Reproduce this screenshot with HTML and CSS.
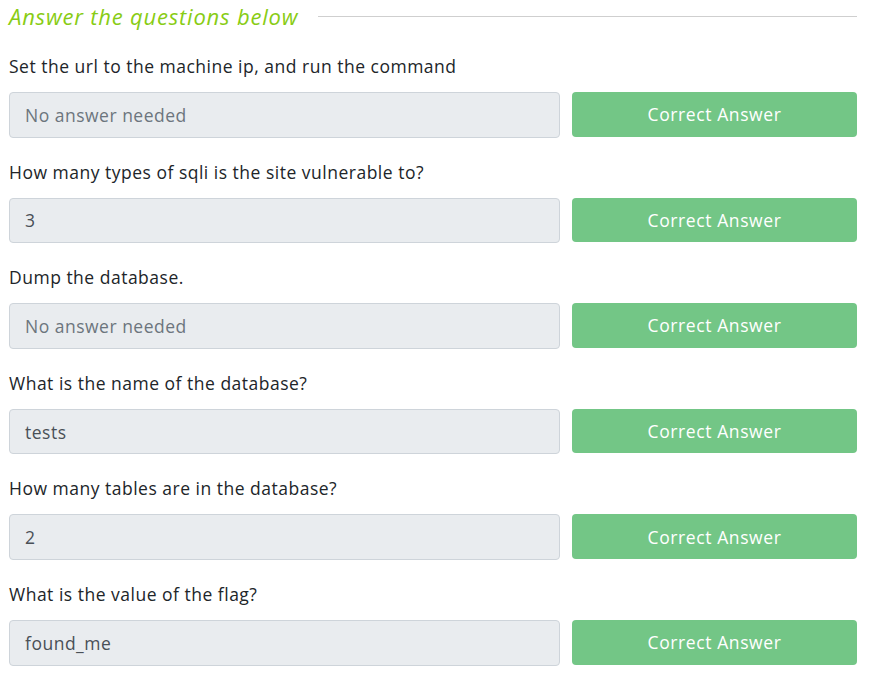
FILE: index.html
```html
<!DOCTYPE html>
<html>
<head>
<meta charset="utf-8">
<link rel="stylesheet" href="styles.css">
</head>
<body>
<div class="wrap">
  <div class="heading">
    <h3 class="title">Answer the questions below</h3>
    <div class="rule"></div>
  </div>
  <div class="q">
    <div class="label">Set the url to the machine ip, and run the command</div>
    <div class="row"><div class="input placeholder">No answer needed</div><div class="btn">Correct Answer</div></div>
  </div>
  <div class="q">
    <div class="label">How many types of sqli is the site vulnerable to?</div>
    <div class="row"><div class="input">3</div><div class="btn">Correct Answer</div></div>
  </div>
  <div class="q">
    <div class="label">Dump the database.</div>
    <div class="row"><div class="input placeholder">No answer needed</div><div class="btn">Correct Answer</div></div>
  </div>
  <div class="q">
    <div class="label">What is the name of the database?</div>
    <div class="row"><div class="input">tests</div><div class="btn">Correct Answer</div></div>
  </div>
  <div class="q">
    <div class="label">How many tables are in the database?</div>
    <div class="row"><div class="input">2</div><div class="btn">Correct Answer</div></div>
  </div>
  <div class="q">
    <div class="label">What is the value of the flag?</div>
    <div class="row"><div class="input">found_me</div><div class="btn">Correct Answer</div></div>
  </div>
</div>
</body>
</html>
```
FILE: styles.css
```css
html, body { margin: 0; padding: 0; background: #ffffff; }
body { font-family: "Open Sans", "Noto Sans", sans-serif; color: #212529; }
.wrap { padding: 2px 12px 0 9px; width: 848px; }
.heading { display: flex; align-items: center; gap: 20px; height: 28px; margin-bottom: 26px; }
.title { margin: 0; font-size: 22px; font-weight: 400; font-style: italic; color: #88cc14; white-space: nowrap; letter-spacing: 0.8px; }
.rule { flex: 1; height: 1px; background: #cfcfcf; }
.q { padding-bottom: 24px; }
.label { font-size: 17.5px; line-height: 20px; margin-bottom: 16px; letter-spacing: 0.5px; }
.row { display: flex; gap: 12px; height: 45.6px; }
.input { flex: 0 0 551px; box-sizing: border-box; background: #e9ecef; border: 1px solid #ced4da; border-radius: 4px; padding: 0 15px; display: flex; align-items: center; font-size: 17.5px; letter-spacing: 0.5px; color: #495057; }
.input.placeholder { color: #6c757d; }
.btn { flex: 1; background: #73c686; color: #ffffff; border-radius: 4px; display: flex; align-items: center; justify-content: center; font-size: 17.5px; letter-spacing: 0.6px; height: 44.6px; }
```
